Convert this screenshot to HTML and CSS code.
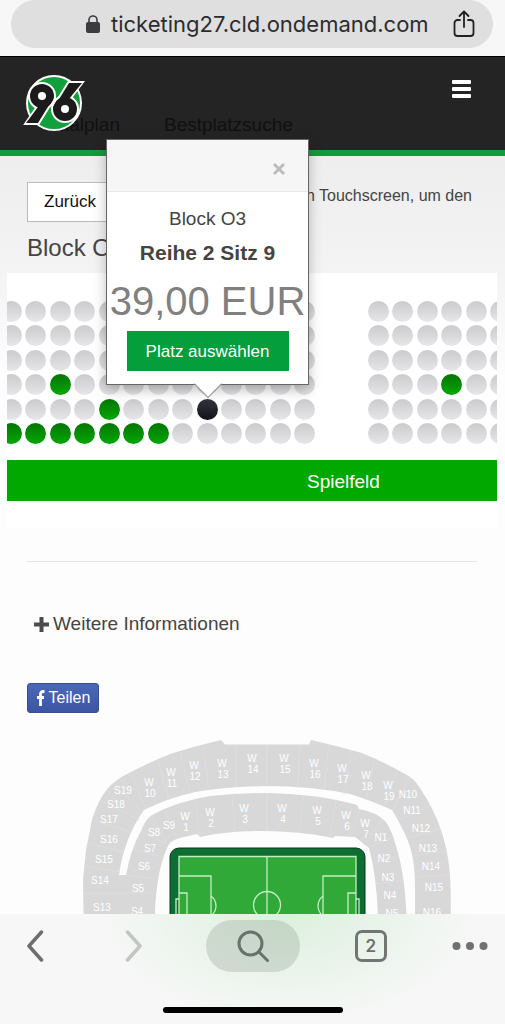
FILE: index.html
```html
<!DOCTYPE html>
<html lang="de">

<head>
    <meta charset="UTF-8">
    <meta name="viewport" content="width=device-width, initial-scale=1.0">
    <title>Saalplan</title>
    <link rel="stylesheet" href="styles.css">
</head>

<body>
    <div class="addressbar">
        <div class="address">
            <svg class="lock" width="16" height="20" viewBox="0 0 16 20">
                <path d="M4 9V6a4 4 0 0 1 8 0v3" fill="none" stroke="#3c3c3e" stroke-width="1.6"/>
                <rect x="1" y="8" width="14" height="11" rx="2" fill="#3c3c3e"/>
            </svg>
            <span class="url">ticketing27.cld.ondemand.com</span>
            <button class="share" type="button" aria-label="Share">
                <svg width="22" height="28" viewBox="0 0 22 28" fill="none" stroke="#222" stroke-width="1.8" stroke-linecap="round" stroke-linejoin="round">
                    <path d="M7 10H4.500a3 3 0 0 0-3 3v10a3 3 0 0 0 3 3h13a3 3 0 0 0 3-3V13a3 3 0 0 0-3-3H15"/>
                    <path d="M11 17V2M6.500 6L11 1.500 15.500 6"/>
                </svg>
            </button>
        </div>
    </div>

    <main class="page">
        <header class="header">
            <a class="logo" href="#" aria-label="Hannover">
                <svg width="64" height="60" viewBox="22 73 64 60">
                    <circle cx="54" cy="103" r="27" fill="#12a03c" stroke="#fff" stroke-width="2"/>
                    <!-- white outline below the mark -->
                    <g fill="#fff" stroke="#fff" stroke-width="4">
                        <circle cx="42" cy="96" r="12"/>
                        <circle cx="65" cy="109" r="12"/>
                        <path d="M27 123L38 107L54 97L38 123Z"/>
                        <path d="M81 83L69 99L53 109L69 83Z"/>
                    </g>
                    <g fill="#1c1a1b">
                        <circle cx="42" cy="96" r="12"/>
                        <path d="M26 123L38 107L54 97L38 123Z"/>
                    </g>
                    <circle cx="65" cy="109" r="13" fill="#fff"/>
                    <g fill="#1c1a1b">
                        <circle cx="65" cy="109" r="12"/>
                        <path d="M82 83L69 99L53 109L69 83Z"/>
                    </g>
                    <path d="M55 98L48 109M59 96L52 107" stroke="#fff" stroke-width="1"/>
                    <circle cx="42" cy="96" r="4" fill="#fff"/>
                    <circle cx="65" cy="109" r="4" fill="#fff"/>
                </svg>
            </a>
            <nav class="tabs">
                <a href="#">Saalplan</a>
                <a href="#">Bestplatzsuche</a>
            </nav>
            <button class="menu" type="button" aria-label="Menü">
                <span></span><span></span><span></span>
            </button>
        </header>

        <section class="intro">
            <button class="btn-back" type="button">Zurück</button>
            <p class="hint">den Touchscreen, um den</p>
        </section>
        <h2 class="block-title">Block O3</h2>

        <section class="plan">
            <div class="plan-clip">
                <div class="seats" id="seats"></div>
                <div class="pitch">Spielfeld</div>
            </div>

            <div class="popover">
                <div class="popover-head">
                    <button class="close" type="button" aria-label="Schließen">
                        <svg width="14" height="14" viewBox="0 0 14 14"><path d="M2 2l10 10M12 2L2 12" stroke="#bdbdbd" stroke-width="3"/></svg>
                    </button>
                </div>
                <div class="popover-body">
                    <p class="pop-block">Block O3</p>
                    <p class="pop-seat">Reihe 2 Sitz 9</p>
                    <p class="pop-price">39,00 EUR</p>
                    <button class="btn-select" type="button">Platz auswählen</button>
                </div>
            </div>
        </section>

        <section class="more">
            <button class="btn-more" type="button">
                <svg width="15" height="15" viewBox="0 0 15 15"><path d="M7.500 0v15M0 7.500h15" stroke="#4c4c4c" stroke-width="4"/></svg>
                Weitere Informationen
            </button>
        </section>
        <button class="btn-share" type="button">
            <svg width="9" height="16" viewBox="0 0 9 16"><path d="M8.500 1.500H7a2.500 2.500 0 0 0-2.500 2.500v12M1 7.500h7" fill="none" stroke="#fff" stroke-width="2.800"/></svg>
            Teilen
        </button>

        <svg class="stadium" viewBox="0 730 505 200">
            <g fill="#d8d8d9">
                <path d="M84 940L83 880L86 850L92 820Q96 806 103 795Q110 783 125 775Q148 763 170 754Q195 746 221 740L225 744.500H309L311 740Q338 746 362 753Q384 762 405 774Q414 778 420 788Q434 809 441 830Q447 848 449 865Q452 889 450 940H415V885Q415 866 411 850Q406 833 392 810Q370 800 350 794Q310 786 267 786Q225 787 195 792Q168 798 144 810Q124 838 119 875H126Q131 848 141 831Q145 820 152 815Q175 802 210 796Q240 793 267 793Q320 794 357 805L359 809Q377 812 386 822Q392 831 396 846Q407 880 407 940H378Q379 885 369 848L355 837L335 836L333 838Q300 831 260 831Q226 831 200 837L197 834L180 838Q170 840 167 848Q153 880 155 940Z"/>
            </g>
            <g stroke="#dedede" stroke-width="1">
                <path d="M84 893h70M84 866l36 6M87 843l36 9M94 820l36 12M101 801l38 19M114 784l28 27M131 774l15 35M158 760l11 40M180 752l10 42M203 746l6 44M236 745v42M267 745v42M300 745l-2 43M329 745l-5 45M352 751l-8 43M375 758l-9 42M398 770l-14 37M409 778l-16 32M430 806l-32 14M440 829l-33 9M446 851l-34 5M449 875l-34 2M152 815l14 28M164 809l12 28M195 800l5 36M232 795l3 37M267 793v38M304 795l-5 37M336 800l-6 36M360 810l-10 27M382 819l-18 26M391 838l-22 9M398 857l-24 6M404 880l-28 4M126 875l30 4M134 850l30 7M141 831l27 14" fill="none"/>
            </g>
            <g class="blocks" id="blocks"></g>
            <rect x="170" y="848" width="195" height="120" rx="9" fill="#0c6e31" stroke="#12351f"/>
            <rect x="179" y="856" width="177" height="120" fill="#30a938"/>
            <g fill="none" stroke="#c4efc2" stroke-width="1.300">
                <path d="M179 960V856.500H356V960M267 856v100M179 876h32v60M179 893h8v40M356 876h-33v60M356 893h-8v40"/>
                <circle cx="267" cy="905" r="13.500"/>
                <path d="M211 896q5 4 5 10t-5 10M323 896q-5 4-5 10t5 10M176 940V899h3M356 899h3v40"/>
            </g>
        </svg>
    </main>

    <footer class="toolbar">
        <div class="tools">
            <button type="button" aria-label="Back"><svg width="18" height="32" viewBox="0 0 18 32"><path d="M15.500 2L3 16l12.500 14" fill="none" stroke="#6c6f6d" stroke-width="3.500" stroke-linecap="round" stroke-linejoin="round"/></svg></button>
            <button type="button" aria-label="Forward"><svg width="18" height="32" viewBox="0 0 18 32"><path d="M2.500 2L15 16 2.500 30" fill="none" stroke="#c2c5c3" stroke-width="3.500" stroke-linecap="round" stroke-linejoin="round"/></svg></button>
            <button class="search" type="button" aria-label="Search"><svg width="34" height="34" viewBox="0 0 34 34" fill="none" stroke="#66736a" stroke-width="3" stroke-linecap="round"><circle cx="14.500" cy="14.500" r="11.500"/><path d="M23 23l8.500 8.500"/></svg></button>
            <button type="button" aria-label="Tabs"><span class="tab-count">2</span></button>
            <button type="button" aria-label="More"><svg width="36" height="8" viewBox="0 0 36 8" fill="#6f7271"><circle cx="4.500" cy="4" r="4"/><circle cx="18" cy="4" r="4"/><circle cx="31.500" cy="4" r="4"/></svg></button>
        </div>
        <div class="home"></div>
    </footer>

    <script src="script.js"></script>
</body>

</html>
```
FILE: styles.css
```css
* {
    margin: 0;
    padding: 0;
    box-sizing: border-box;
    font-family: "Liberation Sans", Arial, sans-serif;
}

body {
    display: flex;
    flex-direction: column;
    height: 100vh;
    background-color: #fdfdfd;
    color: #444;
}

button {
    border: none;
    background: none;
    cursor: pointer;
}

a {
    text-decoration: none;
}

/* browser address bar */
.addressbar {
    flex: none;
    height: 56px;
    padding: 0 12px 8px 11px;
    background-color: #f7f7f7;
}

.address {
    display: flex;
    align-items: center;
    height: 48px;
    padding: 0 18px 0 74px;
    border-radius: 24px;
    background-color: #dfdfdf;
}

.url {
    flex: 1;
    margin-left: 10px;
    font-family: Inter, sans-serif;
    font-size: 22px;
    color: #2c2c2e;
    white-space: nowrap;
}

.share {
    display: flex;
}

.page {
    flex: 1;
    min-height: 0;
    overflow: hidden;
    background: linear-gradient(#eeeeee 100px, #f3f3f3 210px, #fdfdfd 320px);
}

/* header */
.header {
    position: relative;
    display: flex;
    justify-content: space-between;
    align-items: flex-start;
    height: 100px;
    padding: 23px 34px 0 46px;
    border-top: 1px solid #000;
    border-bottom: 6px solid #0f9d3c;
    background-color: #242424;
}

.logo {
    position: absolute;
    left: 22px;
    top: 16px;
}

.tabs {
    display: flex;
    gap: 44px;
    padding-top: 35px;
}

.tabs a {
    font-size: 19px;
    line-height: 20px;
    color: #101010;
}

.menu {
    display: flex;
    flex-direction: column;
    gap: 3px;
}

.menu span {
    width: 19px;
    height: 4px;
    border-radius: 1px;
    background-color: #fff;
}

/* intro */
.intro {
    display: flex;
    justify-content: space-between;
    align-items: flex-start;
    padding: 26px 33px 0 27px;
}

.btn-back {
    height: 40px;
    padding: 0 16px;
    border: 1px solid #bbb;
    background-color: #fff;
    font-size: 17px;
    color: #111;
}

.hint {
    padding-top: 4px;
    font-size: 16px;
    line-height: 20px;
}

.block-title {
    padding: 11px 27px;
    font-size: 24px;
    font-weight: normal;
    line-height: 29px;
}

/* seat plan */
.plan {
    position: relative;
    margin: 0 8px 0 7px;
}

.plan-clip {
    overflow: hidden;
    padding: 26px 0 28px;
    background-color: #fff;
}

.seats {
    display: grid;
    grid-template-columns: repeat(21, 1fr);
    grid-template-rows: repeat(6, 1fr);
    place-items: center;
    height: 147px;
    margin: 0 -16px 0 -8px;
}

.seat {
    width: 21px;
    height: 21px;
    border-radius: 50%;
    background: linear-gradient(#cbcbcd, #e6e6e8);
}

.seat.free {
    background: linear-gradient(#067506, #04a804);
}

.seat.selected {
    background: linear-gradient(#33333f, #12121c);
}

.pitch {
    height: 41px;
    margin-top: 14px;
    padding-left: 300px;
    background-color: #00a800;
    font-size: 19px;
    line-height: 43px;
    color: #fff;
}

/* popover over the selected seat */
.popover {
    position: absolute;
    left: 99px;
    bottom: 144px;
    width: 203px;
    border: 1px solid #666;
    background-color: #fff;
    box-shadow: 0 5px 12px rgba(0, 0, 0, 0.25);
    text-align: center;
}

.popover::after {
    content: '';
    position: absolute;
    left: 91px;
    bottom: -10px;
    width: 19px;
    height: 19px;
    border: solid #999;
    border-width: 0 1px 1px 0;
    background: linear-gradient(135deg, transparent 50%, #fff 50%);
    transform: rotate(45deg);
}

.popover-head {
    display: flex;
    justify-content: flex-end;
    align-items: center;
    height: 52px;
    padding: 6px 22px 0;
    border-bottom: 1px solid #e8e8e8;
    background-color: #f6f6f6;
}

.close {
    display: flex;
}

.popover-body {
    padding: 12px 0 13px;
    white-space: nowrap;
}

.pop-block {
    font-size: 19px;
    line-height: 30px;
}

.pop-seat {
    font-size: 21px;
    font-weight: bold;
    line-height: 37px;
}

.pop-price {
    font-size: 40px;
    line-height: 60px;
    color: #808080;
}

.btn-select {
    display: block;
    width: 162px;
    height: 40px;
    margin: 0 auto;
    padding-top: 2px;
    background-color: #049e3c;
    font-size: 17px;
    color: #fff;
}

/* more information */
.more {
    margin: 32px 27px 0;
    padding: 51px 7px 48px;
    border-top: 1px solid #e6e6e6;
}

.btn-more {
    display: flex;
    align-items: center;
    gap: 4px;
    font-size: 19px;
    line-height: 22px;
    color: #444;
}

.btn-share {
    display: flex;
    align-items: center;
    justify-content: center;
    gap: 4px;
    width: 72px;
    height: 30px;
    margin: 0 27px 17px;
    border: 1px solid #35508f;
    border-radius: 3px;
    background: linear-gradient(#4b68b8, #3d55a3);
    font-size: 16px;
    color: #fff;
}

.stadium {
    display: block;
    width: 100%;
}

.blocks text {
    font-size: 10px;
    text-anchor: middle;
    fill: #fff;
}

/* browser toolbar */
.toolbar {
    flex: none;
    height: 110px;
    padding: 6px 7px 0;
    background: radial-gradient(ellipse 190px 110px at 57% 0, #dcf0de, #f7f7f7);
}

.tools {
    display: flex;
    justify-content: space-between;
    align-items: center;
}

.tools button {
    display: flex;
    justify-content: center;
    align-items: center;
    width: 56px;
    height: 52px;
}

.tools .search {
    width: 94px;
    border-radius: 26px;
    background-color: rgba(60, 80, 65, 0.16);
}

.tab-count {
    width: 32px;
    height: 32px;
    border: 3px solid #727573;
    border-radius: 7px;
    font-family: Inter, sans-serif;
    font-size: 17px;
    font-weight: 600;
    line-height: 26px;
    color: #6c6f6d;
}

.home {
    width: 180px;
    height: 6px;
    margin: 35px auto 0;
    border-radius: 3px;
    background-color: #000;
}
```
FILE: script.js
```javascript
// x = taken, f = free, s = selected, . = aisle
const rows = [
    "xxxxxxxxxxxxx..xxxxxx",
    "xxxxxxxxxxxxx..xxxxxx",
    "xxxxxxxxxxxxx..xxxxxx",
    "xxfxxxxxxxxxx..xxxfxx",
    "xxxxfxxxsxxxx..xxxxxx",
    "fffffffxxxxxx..xxxxxx"
];
const states = { x: "seat", f: "seat free", s: "seat selected" };
const seats = document.getElementById("seats");

rows.forEach((row, r) => {
    [...row].forEach((c, i) => {
        const el = document.createElement(c === "." ? "span" : "button");
        if (c !== ".") {
            el.type = "button";
            el.className = states[c];
            el.disabled = c === "x";
            el.setAttribute("aria-label", "Reihe " + (6 - r) + " Sitz " + (i + 1));
        }
        seats.appendChild(el);
    });
});

// block name, x, y
const blocks = [
    ["S19", 123, 794], ["S18", 116, 808], ["S17", 109, 823], ["S16", 109, 843],
    ["S15", 104, 863], ["S14", 100, 884], ["S13", 102, 911],
    ["S9", 169, 829], ["S8", 154, 836], ["S7", 150, 852], ["S6", 144, 870],
    ["S5", 138, 892], ["S4", 137, 915],
    ["W 10", 149, 786], ["W 11", 171, 776], ["W 12", 194, 769], ["W 13", 222, 767],
    ["W 14", 252, 762], ["W 15", 284, 762], ["W 16", 314, 767], ["W 17", 342, 772],
    ["W 18", 366, 779], ["W 19", 388, 789],
    ["W 1", 185, 820], ["W 2", 210, 816], ["W 3", 244, 812], ["W 4", 282, 812],
    ["W 5", 317, 814], ["W 6", 346, 819], ["W 7", 365, 827],
    ["N10", 408, 798], ["N11", 412, 814], ["N12", 421, 832], ["N13", 428, 852],
    ["N14", 431, 870], ["N15", 434, 891], ["N16", 432, 916],
    ["N1", 381, 841], ["N2", 384, 862], ["N3", 388, 881], ["N4", 390, 899], ["N5", 392, 917]
];
const svgNS = "http://www.w3.org/2000/svg";
const group = document.getElementById("blocks");

blocks.forEach(([name, x, y]) => {
    name.split(" ").forEach((part, i) => {
        const t = document.createElementNS(svgNS, "text");
        t.setAttribute("x", x + i);
        t.setAttribute("y", y + i * 11);
        t.textContent = part;
        group.appendChild(t);
    });
});
```
